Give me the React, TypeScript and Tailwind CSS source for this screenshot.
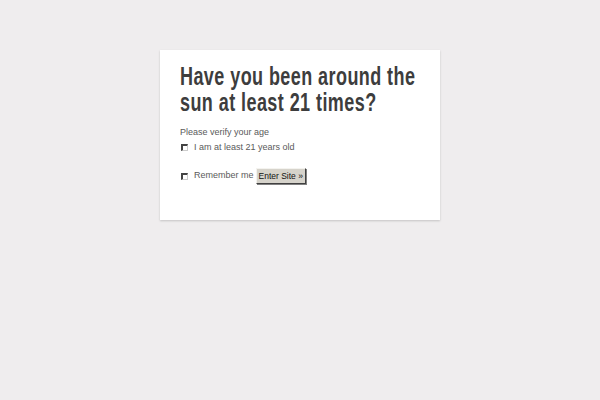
const Box = () => (
  <span className="inline-block w-[7px] h-[7px] border-t-2 border-l-2 border-t-[#444] border-l-[#444] border-r border-b border-r-[#ccc] border-b-[#ccc] bg-white" />
);

export default function App() {
  return (
    <div className="w-[600px] h-[400px] bg-[#efedee] pt-[50px] font-['Liberation_Sans',sans-serif]">
      <div className="mx-auto w-[280px] h-[170px] bg-white shadow-[0_1px_2px_rgba(0,0,0,0.18)] px-5 pt-[13px]">
        <h1 className="w-[330px] origin-left scale-x-[0.72] text-[#3d3d3d] text-[25px] leading-[26px] font-bold tracking-[0.6px]">
          Have you been around the
          <br />
          sun at least 21 times?
        </h1>
        <p className="mt-[11px] text-[9px] text-[#5a5a5a]">Please verify your age</p>
        <label className="mt-[1px] flex items-center gap-[6px] pl-[1px] text-[9px] text-[#5a5a5a]">
          <Box />
          I am at least 21 years old
        </label>
        <div className="mt-[14px] flex items-center text-[9px] text-[#5a5a5a] pl-[1px]">
          <Box />
          <span className="ml-[6px]">Remember me</span>
          <button className="ml-[2px] h-[16px] px-[2px] bg-[#d6d3cb] text-[#111] text-[8.5px] font-normal border border-t-[#f4f3ef] border-l-[#f4f3ef] border-r-[#404040] border-b-[#404040] shadow-[1px_1px_0_#808080]">
            Enter Site »
          </button>
        </div>
      </div>
    </div>
  );
}
